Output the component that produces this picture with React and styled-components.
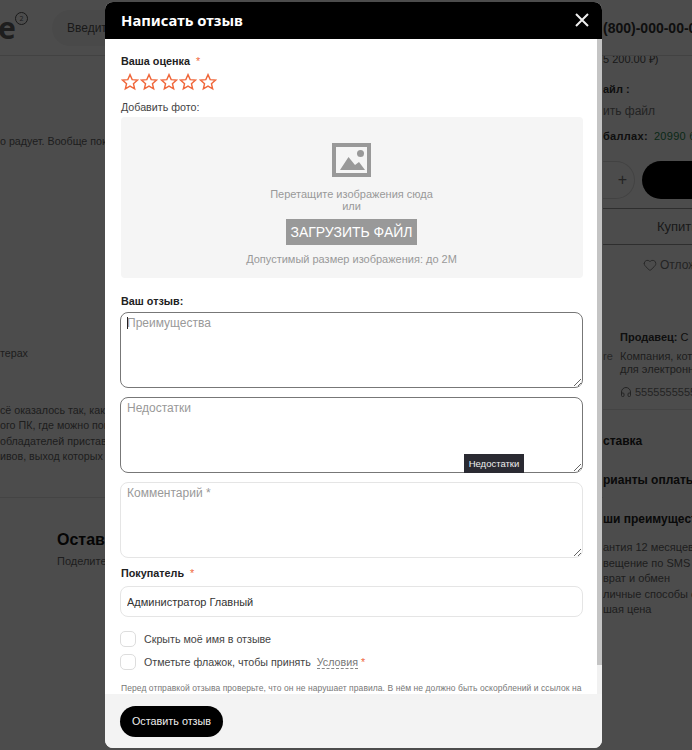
import styled, { createGlobalStyle } from "styled-components";
import { Headphones, Heart } from "lucide-react";

const GlobalStyle = createGlobalStyle`
  * { box-sizing: border-box; }
  html, body { margin: 0; padding: 0; height: 100%; overflow: hidden; }
  body { font-family: "Liberation Sans", Arial, sans-serif; background: #fff; color: #222; }
`;

const leftLines = [
  "сё оказалось так, как",
  "ого ПК, где можно пои",
  "обладателей пристав",
  "ивов, выход которых н",
];

const perks = [
  "антия 12 месяцев",
  "вещение по SMS",
  "врат и обмен",
  "личные способы о",
  "шая цена",
];

// Звезда рейтинга
function Star() {
  return (
    <svg width="18" height="18" viewBox="0 0 24 24" fill="none" stroke="#f0683c" strokeWidth="1.9" strokeLinejoin="miter">
      <path d="M12 2.2l2.9 6.6 7.1.7-5.4 4.7 1.6 7-6.2-3.7-6.2 3.7 1.6-7L2 9.500l7.100-.7z" />
    </svg>
  );
}

function ImageIcon() {
  return (
    <svg width="39" height="34" viewBox="0 0 39 34">
      <path fill="#999" fillRule="evenodd" d="M0 0h39v34H0zM4 4v26h31V4z" />
      <circle cx="28.500" cy="10.500" r="3.500" fill="#999" />
      <path fill="#999" d="M8 27l8.500-13 6.500 8 4-3 6 8z" />
    </svg>
  );
}

export default function App() {
  return (
    <>
      <GlobalStyle />
      <Page>
        <TopBar>
          <Logo>
            e<LogoMark>2</LogoMark>
          </Logo>
          <SearchBox>Введите</SearchBox>
          <PhoneNumber>(800)-000-00-00</PhoneNumber>
        </TopBar>
        <Columns>
          <LeftColumn>
            <BackText $top={77}>о радует. Вообще пок</BackText>
            <BackText $top={196}>терах</BackText>
            <TextBlock>
              {leftLines.map((line) => (
                <div key={line}>{line}</div>
              ))}
            </TextBlock>
            <BackDivider />
            <ReviewTitle>Оставить отзыв</ReviewTitle>
            <ReviewHint>Поделитесь</ReviewHint>
          </LeftColumn>
          <RightColumn>
            <PriceNote>5 200.00 ₽)</PriceNote>
            <SideLabel>айл :</SideLabel>
            <SideLink>ить файл</SideLink>
            <PointsRow>
              <b>баллах:</b>
              <PointsValue>20990 б</PointsValue>
            </PointsRow>
            <BuyRow>
              <QtyBox>+</QtyBox>
              <BuyButton />
            </BuyRow>
            <OneClick>Купить</OneClick>
            <WishRow>
              <Heart size={14} strokeWidth={1.5} />
              Отлож
            </WishRow>
            <Seller>
              <SellerName>
                <b>Продавец:</b> С
              </SellerName>
              <SellerBody>
                <SellerAside>re</SellerAside>
                <SellerText>
                  Компания, кот
                  <br />
                  для электронн
                </SellerText>
              </SellerBody>
              <SellerPhone>
                <Headphones size={12} />
                55555555555
              </SellerPhone>
            </Seller>
            <SideHeading $top={24}>ставка</SideHeading>
            <SideHeading $top={24}>рианты оплаты</SideHeading>
            <SideHeading $top={24}>ши преимущест</SideHeading>
            <PerkList>
              {perks.map((perk) => (
                <div key={perk}>{perk}</div>
              ))}
            </PerkList>
          </RightColumn>
        </Columns>
      </Page>

      <Overlay>
        <Modal>
          <ModalHeader>
            <ModalTitle>Написать отзыв</ModalTitle>
            <CloseButton>
              <svg width="14" height="14" viewBox="0 0 14 14" stroke="#eee" strokeWidth="2">
                <path d="M1 1l12 12M13 1L1 13" />
              </svg>
            </CloseButton>
          </ModalHeader>
          <ModalBody>
            <FieldLabel>
              Ваша оценка <Required>*</Required>
            </FieldLabel>
            <Stars>
              {[1, 2, 3, 4, 5].map((n) => (
                <Star key={n} />
              ))}
            </Stars>
            <PhotoLabel>Добавить фото:</PhotoLabel>
            <DropZone>
              <ImageIcon />
              <DropText>
                Перетащите изображения сюда
                <br />
                или
              </DropText>
              <UploadButton>Загрузить файл</UploadButton>
              <DropHint>Допустимый размер изображения: до 2М</DropHint>
            </DropZone>
            <ReviewLabel>Ваш отзыв:</ReviewLabel>
            <AreaWrap $top={4}>
              <Area $active placeholder="Преимущества" readOnly />
              <Caret />
            </AreaWrap>
            <AreaWrap $top={9}>
              <Area $active placeholder="Недостатки" readOnly />
              <Tip>Недостатки</Tip>
            </AreaWrap>
            <AreaWrap $top={9}>
              <Area placeholder="Комментарий *" readOnly />
            </AreaWrap>
            <BuyerLabel>
              Покупатель <Required>*</Required>
            </BuyerLabel>
            <TextInput value="Администратор Главный" readOnly />
            <CheckRow $top={14}>
              <CheckBox />
              Скрыть моё имя в отзыве
            </CheckRow>
            <CheckRow $top={7}>
              <CheckBox />
              Отметьте флажок, чтобы принять <TermsLink>Условия</TermsLink> <Required>*</Required>
            </CheckRow>
            <Rules>
              Перед отправкой отзыва проверьте, что он не нарушает правила. В нём не должно быть оскорблений и ссылок на
              сторонние ресурсы.
            </Rules>
          </ModalBody>
          <ModalFooter>
            <SubmitButton>Оставить отзыв</SubmitButton>
          </ModalFooter>
          <ScrollTrack />
          <ScrollThumb />
        </Modal>
      </Overlay>
    </>
  );
}

// Страница за модальным окном
const Page = styled.div`
  width: 692px;
  height: 750px;
  overflow: hidden;
  font-size: 11px;
  color: #555;
`;

const TopBar = styled.header`
  position: relative;
  z-index: 1;
  display: flex;
  align-items: center;
  height: 56px;
  border-bottom: 1px solid #ddd;
  background: #fff;
`;

const Logo = styled.div`
  position: relative;
  flex: none;
  width: 52px;
  margin-left: -2px;
  font-family: "Noto Sans", sans-serif;
  font-size: 30px;
  font-weight: 700;
  color: #666;
`;

const LogoMark = styled.span`
  position: absolute;
  left: 17px;
  top: 5px;
  width: 13px;
  height: 13px;
  border: 1px solid #555;
  border-radius: 50%;
  font-size: 7px;
  font-weight: 400;
  line-height: 11px;
  text-align: center;
`;

const SearchBox = styled.div`
  flex: none;
  width: 200px;
  height: 36px;
  margin-left: 2px;
  padding-left: 15px;
  border-radius: 18px;
  background: #f5f5f5;
  font-size: 12px;
  line-height: 36px;
  color: #555;
`;

const PhoneNumber = styled.div`
  flex: none;
  margin-left: 351px;
  font-size: 14px;
  font-weight: 700;
  color: #333;
  white-space: nowrap;
`;

const Columns = styled.div`
  display: grid;
  grid-template-columns: 603px 1fr;
`;

const LeftColumn = styled.div`
  white-space: nowrap;
  font-size: 10.700px;
  color: #666;
`;

const BackText = styled.div`
  margin-top: ${(p) => p.$top}px;
  line-height: 16px;
`;

const TextBlock = styled.div`
  margin-top: 42px;
  line-height: 15.400px;
`;

const BackDivider = styled.div`
  margin-top: 32px;
  border-top: 1px solid #e4e4e4;
`;

const ReviewTitle = styled.div`
  margin: 33px 0 0 57px;
  font-size: 16px;
  font-weight: 700;
  color: #111;
`;

const ReviewHint = styled.div`
  margin: 5px 0 0 57px;
  font-size: 11px;
  line-height: 14px;
`;

const RightColumn = styled.div`
  white-space: nowrap;
  overflow: hidden;
`;

const PriceNote = styled.div`
  margin-top: -4px;
  line-height: 14px;
`;

const SideLabel = styled.div`
  margin-top: 17px;
  font-weight: 700;
  color: #333;
`;

const SideLink = styled.div`
  margin-top: 9px;
  font-size: 12px;
  color: #777;
`;

const PointsRow = styled.div`
  margin-top: 12px;
  letter-spacing: 0.3px;
  color: #333;
`;

const PointsValue = styled.span`
  margin-left: 6px;
  color: #1f8a50;
`;

const BuyRow = styled.div`
  display: flex;
  gap: 7px;
  margin-top: 19px;
`;

const QtyBox = styled.div`
  flex: none;
  width: 32px;
  height: 38px;
  padding-right: 7px;
  border: 1px solid #ddd;
  border-left: 0;
  border-radius: 0 19px 19px 0;
  font-size: 16px;
  line-height: 36px;
  text-align: right;
  color: #777;
`;

const BuyButton = styled.div`
  flex: none;
  width: 120px;
  height: 38px;
  border-radius: 19px;
  background: #000;
`;

const OneClick = styled.div`
  margin-top: 9px;
  height: 37px;
  padding-left: 54px;
  border-top: 1px solid #999;
  border-bottom: 1px solid #999;
  font-size: 13px;
  line-height: 35px;
  color: #555;
`;

const WishRow = styled.div`
  display: flex;
  align-items: center;
  gap: 3px;
  height: 40px;
  padding-left: 40px;
  font-size: 12px;
  color: #777;

  svg {
    flex: none;
  }
`;

const Seller = styled.div`
  margin-top: 46px;
  padding-bottom: 11px;
  border-bottom: 1px solid #e4e4e4;
  color: #333;
`;

const SellerName = styled.div`
  padding-left: 17px;
`;

const SellerBody = styled.div`
  display: flex;
  margin-top: 7px;
`;

const SellerAside = styled.div`
  flex: none;
  width: 17px;
  color: #888;
`;

const SellerText = styled.div`
  line-height: 13px;
  color: #666;
`;

const SellerPhone = styled.div`
  display: flex;
  align-items: center;
  gap: 3px;
  margin-top: 10px;
  padding-left: 17px;
  color: #777;

  svg {
    flex: none;
  }
`;

const SideHeading = styled.div`
  margin-top: ${(p) => p.$top}px;
  font-size: 12px;
  line-height: 15px;
  font-weight: 700;
  color: #222;
`;

const PerkList = styled.div`
  margin-top: 13px;
  line-height: 15.500px;
  color: #666;
`;

// Затемнение и окно отзыва
const Overlay = styled.div`
  position: fixed;
  inset: 0;
  z-index: 2;
  display: flex;
  padding: 2px 90px 2px 105px;
  background: rgba(0, 0, 0, 0.7);
`;

const Modal = styled.section`
  position: relative;
  display: flex;
  flex-direction: column;
  width: 497px;
  border-radius: 8px;
  overflow: hidden;
  background: #fff;
`;

const ModalHeader = styled.div`
  display: flex;
  flex: none;
  align-items: center;
  justify-content: space-between;
  height: 37px;
  padding: 0 13px 2px 16px;
  background: #000;
`;

const ModalTitle = styled.h2`
  margin: 0;
  font-family: "Noto Sans", sans-serif;
  font-size: 14.800px;
  font-weight: 700;
  color: #fff;
`;

const CloseButton = styled.div`
  display: flex;
`;

const ModalBody = styled.div`
  flex: 1;
  min-height: 0;
  overflow: hidden;
  padding: 16px 19px 10px 16px;
`;

const ScrollTrack = styled.div`
  position: absolute;
  right: 0;
  top: 37px;
  bottom: 54px;
  width: 5px;
  background: #f1f1f1;
`;

const ScrollThumb = styled.div`
  position: absolute;
  right: 0;
  top: 37px;
  width: 5px;
  height: 626px;
  background: #c4c4c4;
`;

const FieldLabel = styled.div`
  font-size: 10.800px;
  line-height: 13px;
  font-weight: 700;
  color: #222;
`;

const Required = styled.span`
  margin-left: 3px;
  font-weight: 400;
  color: #f0683c;
`;

const Stars = styled.div`
  display: flex;
  gap: 1.400px;
  margin: 5px 0 0;
  height: 20px;
`;

const PhotoLabel = styled.div`
  margin-top: 8px;
  font-size: 10.700px;
  line-height: 13px;
  color: #444;
`;

const DropZone = styled.div`
  display: flex;
  flex-direction: column;
  align-items: center;
  height: 161px;
  margin-top: 3px;
  padding: 26px 1px 0 0;
  border-radius: 4px;
  background: #f5f5f5;
  color: #999;
`;

const DropText = styled.div`
  margin-top: 11px;
  font-size: 11px;
  line-height: 12px;
  text-align: center;
`;

const UploadButton = styled.div`
  width: 131px;
  height: 26px;
  margin-top: 7px;
  background: #999;
  color: #fff;
  font-size: 14px;
  line-height: 26px;
  text-align: center;
  text-transform: uppercase;
`;

const DropHint = styled.div`
  margin-top: 8px;
  font-size: 11px;
  line-height: 13px;
`;

const ReviewLabel = styled(FieldLabel)`
  margin-top: 17px;
`;

const AreaWrap = styled.div`
  position: relative;
  height: 76px;
  margin-top: ${(p) => p.$top}px;
`;

const Area = styled.textarea`
  display: block;
  width: 463px;
  height: 76px;
  margin-left: -1px;
  padding: 3px 6px;
  border: 1px solid ${(p) => (p.$active ? "#777" : "#e5e5e5")};
  border-radius: 8px;
  outline: none;
  font-family: "Liberation Sans", Arial, sans-serif;
  font-size: 12px;
  resize: vertical;

  &::placeholder {
    color: #999;
    opacity: 1;
  }
`;

const Caret = styled.span`
  position: absolute;
  left: 6px;
  top: 5px;
  width: 1px;
  height: 12px;
  background: #222;
`;

const Tip = styled.span`
  position: absolute;
  left: 343px;
  top: 57px;
  width: 60px;
  height: 19px;
  background: #2a2a32;
  color: #eee;
  font-size: 9.500px;
  line-height: 19px;
  text-align: center;
`;

const BuyerLabel = styled(FieldLabel)`
  margin-top: 9px;
`;

const TextInput = styled.input`
  display: block;
  width: 463px;
  height: 31px;
  margin: 6px 0 0 -1px;
  padding: 0 6px;
  border: 1px solid #e5e5e5;
  border-radius: 8px;
  outline: none;
  font-family: "Liberation Sans", Arial, sans-serif;
  font-size: 11px;
  color: #333;
`;

const CheckRow = styled.div`
  display: flex;
  align-items: center;
  height: 16px;
  margin: ${(p) => p.$top}px 0 0 -1px;
  font-size: 10.700px;
  color: #444;
  white-space: pre;
`;

const CheckBox = styled.span`
  flex: none;
  width: 16px;
  height: 16px;
  margin-right: 8px;
  border: 1px solid #ddd;
  border-radius: 5px;
`;

const TermsLink = styled.span`
  margin-left: 3px;
  border-bottom: 1px dashed #888;
  color: #777;
`;

const Rules = styled.p`
  margin: 11px 0 0;
  font-size: 8.500px;
  line-height: 14px;
  letter-spacing: 0.07px;
  color: #777;
`;

const ModalFooter = styled.div`
  position: relative;
  z-index: 1;
  flex: none;
  height: 54px;
  padding: 12px 15px;
  background: #f3f3f3;
`;

const SubmitButton = styled.div`
  width: 103px;
  height: 31px;
  border-radius: 16px;
  background: #000;
  color: #eee;
  font-size: 10.800px;
  line-height: 31px;
  text-align: center;
`;
